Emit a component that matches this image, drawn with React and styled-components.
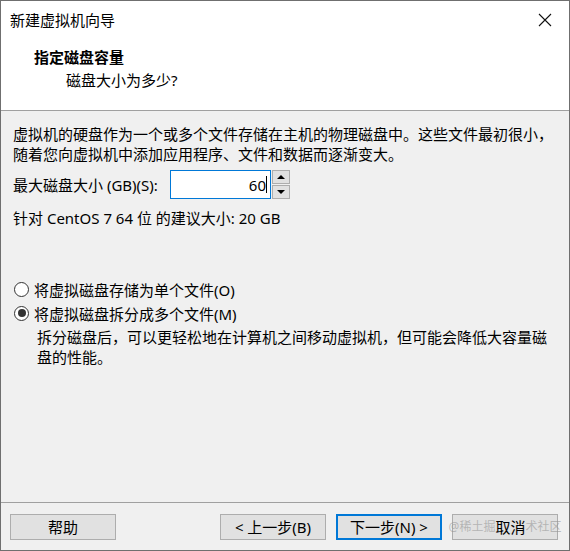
import React from "react";
import styled, { createGlobalStyle } from "styled-components";

const GlobalStyle = createGlobalStyle`
  html, body {
    margin: 0;
    padding: 0;
    background: #ffffff;
  }
  body {
    font-family: "Noto Sans", "Noto Sans CJK SC", sans-serif;
    font-size: 15px;
    color: #000;
  }
`;

const App = () => {
  return (
    <>
      <GlobalStyle />
      <Window>
        <TitleBar>
          <TitleText>新建虚拟机向导</TitleText>
          <CloseButton aria-label="close">
            <svg width="14" height="14" viewBox="0 0 14 14">
              <path d="M1 1 L13 13 M13 1 L1 13" stroke="#111" strokeWidth="1.1" fill="none" />
            </svg>
          </CloseButton>
        </TitleBar>

        <Header>
          <Heading>指定磁盘容量</Heading>
          <SubHeading>磁盘大小为多少?</SubHeading>
        </Header>

        <Body>
          <Paragraph>
            虚拟机的硬盘作为一个或多个文件存储在主机的物理磁盘中。这些文件最初很小，随着您向虚拟机中添加应用程序、文件和数据而逐渐变大。
          </Paragraph>

          <SizeRow>
            <Label>最大磁盘大小 (GB)(S):</Label>
            <SizeInput>
              <Value>60</Value>
              <Caret />
            </SizeInput>
            <Spinner>
              <SpinButton>
                <Triangle up />
              </SpinButton>
              <SpinButton>
                <Triangle />
              </SpinButton>
            </Spinner>
          </SizeRow>

          <Hint>针对 CentOS 7 64 位 的建议大小: 20 GB</Hint>

          <RadioGroup>
            <RadioRow>
              <Radio />
              <span>将虚拟磁盘存储为单个文件(O)</span>
            </RadioRow>
            <RadioRow>
              <Radio checked />
              <span>将虚拟磁盘拆分成多个文件(M)</span>
            </RadioRow>
            <Description>
              拆分磁盘后，可以更轻松地在计算机之间移动虚拟机，但可能会降低大容量磁盘的性能。
            </Description>
          </RadioGroup>
        </Body>

        <Footer>
          <Button>帮助</Button>
          <Spacer />
          <Button>&lt; 上一步(B)</Button>
          <Button primary>下一步(N) &gt;</Button>
          <Button>
            <Watermark>@稀土掘</Watermark>
            <span>取消</span>
            <Watermark>术社区</Watermark>
          </Button>
        </Footer>
      </Window>
    </>
  );
};

export default App;

const Window = styled.div`
  position: relative;
  box-sizing: border-box;
  width: 570px;
  height: 551px;
  border: 1px solid #6f6f6f;
  background: #f0f0f0;
  display: flex;
  flex-direction: column;
`;

const TitleBar = styled.div`
  height: 38px;
  background: #ffffff;
  display: flex;
  align-items: center;
  justify-content: space-between;
  padding: 0 14px 0 9px;
`;

const TitleText = styled.span`
  font-size: 15px;
  line-height: 38px;
`;

const CloseButton = styled.div`
  width: 20px;
  height: 20px;
  display: flex;
  align-items: center;
  justify-content: center;
`;

const Header = styled.div`
  box-sizing: border-box;
  height: 72px;
  background: #ffffff;
  border-bottom: 1px solid #a0a0a0;
  padding: 8px 0 0 33px;
`;

const Heading = styled.div`
  font-size: 15px;
  font-weight: bold;
  line-height: 20px;
`;

const SubHeading = styled.div`
  font-size: 15px;
  line-height: 20px;
  margin: 3px 0 0 32px;
`;

const Body = styled.div`
  flex: 1;
  padding: 13px 0 0 12px;
`;

const Paragraph = styled.div`
  width: 545px;
  line-height: 20px;
`;

const SizeRow = styled.div`
  display: flex;
  align-items: center;
  margin-top: 6px;
  height: 29px;
`;

const Label = styled.span`
  width: 157px;
  line-height: 20px;
  white-space: nowrap;
`;

const SizeInput = styled.div`
  box-sizing: border-box;
  width: 101px;
  height: 29px;
  border: 1px solid #0078d7;
  background: #ffffff;
  display: flex;
  align-items: center;
  justify-content: flex-end;
  padding-right: 3px;
`;

const Value = styled.span`
  line-height: 20px;
`;

const Caret = styled.span`
  width: 1px;
  height: 17px;
  background: #000;
`;

const Spinner = styled.div`
  display: flex;
  flex-direction: column;
  gap: 1px;
  margin-left: 1px;
  height: 29px;
`;

const SpinButton = styled.div`
  box-sizing: border-box;
  width: 18px;
  height: 14px;
  border: 1px solid #adadad;
  background: #e1e1e1;
  display: flex;
  align-items: center;
  justify-content: center;
`;

const Triangle = styled.span`
  width: 0;
  height: 0;
  border-left: 4px solid transparent;
  border-right: 4px solid transparent;
  ${({ up }) =>
    up ? "border-bottom: 4px solid #000;" : "border-top: 4px solid #000;"}
`;

const Hint = styled.div`
  margin-top: 9px;
  line-height: 20px;
`;

const RadioGroup = styled.div`
  margin-top: 49px;
`;

const RadioRow = styled.div`
  display: flex;
  align-items: center;
  height: 24px;
  gap: 5px;
`;

const Radio = styled.span`
  box-sizing: border-box;
  width: 15px;
  height: 15px;
  margin-left: 1px;
  border-radius: 50%;
  border: 1px solid #333333;
  background: #ffffff;
  display: flex;
  align-items: center;
  justify-content: center;
  &::after {
    content: "";
    width: 8px;
    height: 8px;
    border-radius: 50%;
    background: ${({ checked }) => (checked ? "#333333" : "transparent")};
  }
`;

const Description = styled.div`
  width: 515px;
  margin: 2px 0 0 24px;
  line-height: 20px;
`;

const Footer = styled.div`
  display: flex;
  align-items: flex-start;
  gap: 10px;
  border-top: 1px solid #a0a0a0;
  height: 48px;
  box-sizing: border-box;
  padding: 11px 11px 0 9px;
`;

const Spacer = styled.div`
  flex: 1;
`;

const Button = styled.div`
  box-sizing: border-box;
  width: 106px;
  height: 26px;
  display: flex;
  align-items: center;
  justify-content: center;
  white-space: nowrap;
  background: #e1e1e1;
  border: ${({ primary }) => (primary ? "2px solid #0078d7" : "1px solid #adadad")};
  font-size: 15px;
  line-height: 20px;
`;

const Watermark = styled.span`
  font-size: 12px;
  line-height: 16px;
  color: rgba(150, 150, 150, 0.6);
`;
